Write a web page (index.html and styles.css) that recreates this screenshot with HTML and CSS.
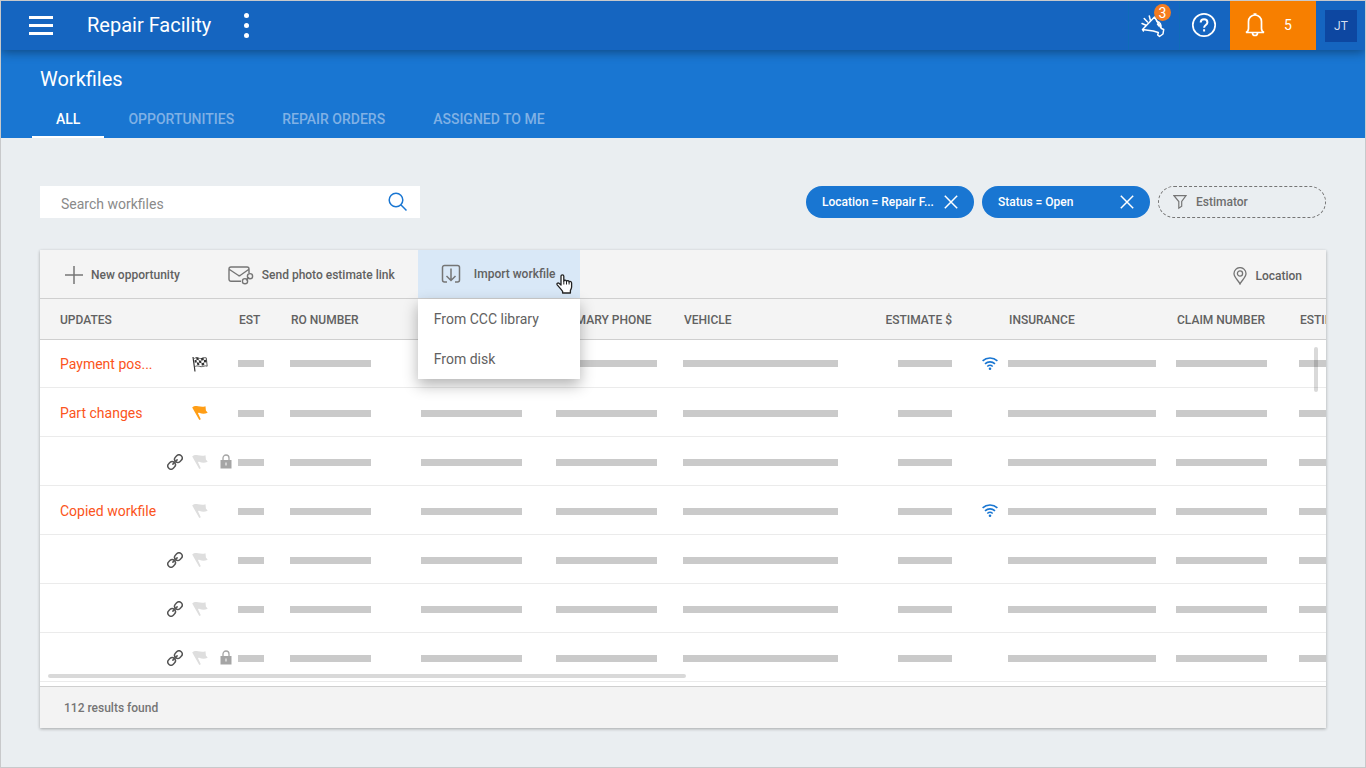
FILE: index.html
```html
<!DOCTYPE html>
<html lang="en">
<head>
    <meta charset="UTF-8">
    <meta name="viewport" content="width=device-width, initial-scale=1.0">
    <title>Workfiles</title>
    <link rel="stylesheet" href="styles.css">
</head>
<body>
    <!-- shared row icons -->
    <svg class="sprite" aria-hidden="true">
        <symbol id="flag" viewBox="0 0 16 16">
            <path fill="currentColor" d="M.2 2.500C2 .8 4 .7 6 1.200c2.500.4 4.500 1 7.500 0l.4 4.400 1.800 2.200c-3 1.300-5.600 1.200-8 .2-.7-.3-1.300-.2-1.700.2l2.800 6-1.500.8z"/>
        </symbol>
        <symbol id="checkered" viewBox="0 0 16 16">
            <path fill="none" stroke="currentColor" stroke-width="1.200" d="M1 1l2 14.500"/>
            <path fill="none" stroke="currentColor" stroke-width=".8" d="M2.300 2.500c2.500-2 4.500.4 7 0 2-.4 3-1.200 5-.6l.9 8.300c-2.500-1-4 .6-6 .5-2.500-.2-3.500-1.500-6-.3"/>
            <path fill="currentColor" d="M4.200 1.300l2.300.5.3 2.500-2.300-.5zM9 2.300l2.500-.8.3 2.500-2.500.7zM6.800 4.300l2.400.5.3 2.500-2.400-.5zM11.800 4l2.500-.2.3 2.500-2.500.2zM4.800 6.300l2.300.5.3 2.500-2.300-.5zM9.500 7.300l2.500-.8.3 2.500-2.500.8zM2.500 4.200l2-.4.3 2.500-2 .4z"/>
        </symbol>
        <symbol id="chain" viewBox="0 0 16 16">
            <g fill="none" stroke="currentColor" stroke-width="1.500" stroke-linecap="round" transform="rotate(-45 8 8)">
                <rect x="-.8" y="4.800" width="8" height="6.400" rx="3.200"/>
                <rect x="8.800" y="4.800" width="8" height="6.400" rx="3.200"/>
                <path d="M5 8h6"/>
            </g>
        </symbol>
        <symbol id="lock" viewBox="0 0 12 16">
            <path fill="none" stroke="currentColor" stroke-width="1.300" d="M3 7V4a3 3 0 0 1 6 0V7"/>
            <path fill="currentColor" fill-rule="evenodd" d="M.5 6h11v8.500H.5zM5.500 8.500v3h1v-3z"/>
        </symbol>
        <symbol id="wifi" viewBox="0 0 16 14">
            <path fill="none" stroke="currentColor" stroke-width="1.600" d="M.6 3.900a11 11 0 0 1 14.800 0M3 6.800a7.500 7.500 0 0 1 10 0M5.300 9.500a4 4 0 0 1 5.400 0"/>
            <circle cx="8" cy="11.700" r="1.300" fill="currentColor"/>
        </symbol>
        <symbol id="close" viewBox="0 0 14 14">
            <path fill="none" stroke="currentColor" stroke-width="1.500" d="M.8.8l12.400 12.400M13.200.8L.8 13.200"/>
        </symbol>
    </svg>

    <header class="topbar">
        <button class="menu-btn" aria-label="Menu"><span></span><span></span><span></span></button>
        <div class="brand">Repair Facility</div>
        <button class="more-btn" aria-label="More"><span></span><span></span><span></span></button>
        <div class="top-actions">
            <button class="top-btn" aria-label="Announcements">
                <svg width="26" height="26" viewBox="0 0 26 26" fill="none" stroke="#fff" stroke-width="1.500" stroke-linejoin="round" stroke-linecap="round">
                    <path d="M2.500 17.500L14.500 5l7 11.500 2.200 1-.7 4.500-3.500 2.500-1.800-1.500.6-2.500-5-1.500zM2.500 17.500l1 1.500"/>
                    <path d="M17 9.500a4.200 4.200 0 0 1 3.500 6M17.500 12l1.500 2M2 11.500l4 1.800M4.200 6.500l3.300 3.500M9.300 4l1 4"/>
                </svg>
                <span class="badge">3</span>
            </button>
            <button class="top-btn" aria-label="Help">
                <svg width="26" height="26" viewBox="0 0 26 26" fill="none" stroke="#fff">
                    <circle cx="13" cy="13" r="11.200" stroke-width="1.700"/>
                    <path stroke-width="2" d="M9.700 10.600c0-4.400 6.700-4.200 6.700-.2 0 2.400-3.300 2.700-3.300 5.300M13.100 17.200v2.200"/>
                </svg>
            </button>
            <button class="top-btn alerts" aria-label="Notifications">
                <svg width="20" height="26" viewBox="0 0 20 26" fill="none" stroke="#fff" stroke-width="1.700">
                    <path d="M1 20.500c2-1 2.500-2 2.500-4V9.500a6.500 6.500 0 0 1 13 0v7c0 2 .5 3 2.500 4zM8.500 2.200h3M7.500 21a2.500 2.500 0 0 0 5 0"/>
                </svg>
                <span>5</span>
            </button>
            <button class="avatar">JT</button>
        </div>
    </header>

    <section class="subheader">
        <h1>Workfiles</h1>
        <nav class="tabs">
            <a href="#" class="active">ALL</a>
            <a href="#">OPPORTUNITIES</a>
            <a href="#">REPAIR ORDERS</a>
            <a href="#">ASSIGNED TO ME</a>
        </nav>
    </section>

    <main>
        <div class="filters">
            <div class="search">
                <input type="text" placeholder="Search workfiles" aria-label="Search workfiles">
                <button aria-label="Search">
                    <svg width="20" height="20" viewBox="0 0 20 20" fill="none" stroke="#1976d2" stroke-width="1.500">
                        <circle cx="8" cy="8" r="6.800"/>
                        <path d="M12.800 12.800l5.700 5.700"/>
                    </svg>
                </button>
            </div>
            <div class="chips">
                <button class="chip">Location = Repair F...<svg width="14" height="14"><use href="#close"/></svg></button>
                <button class="chip">Status = Open<svg width="14" height="14"><use href="#close"/></svg></button>
                <button class="chip empty">
                    <svg width="14" height="16" viewBox="0 0 14 16" fill="none" stroke="#757575" stroke-width="1.200">
                        <path d="M1 1.700h12L8.700 7.500v4.700l-2.900 2V7.500z"/>
                    </svg>
                    Estimator
                </button>
            </div>
        </div>

        <div class="card">
            <div class="toolbar">
                <button class="tool">
                    <svg width="18" height="18" viewBox="0 0 18 18" stroke="#757575" stroke-width="1.500">
                        <path d="M9 0v18M0 9h18"/>
                    </svg>
                    New opportunity
                </button>
                <button class="tool">
                    <svg width="26" height="20" viewBox="0 0 26 20" fill="none" stroke="#757575" stroke-width="1.400">
                        <path d="M13 16.300H3A2 2 0 0 1 1 14.300V4A2 2 0 0 1 3 2h16a2 2 0 0 1 2 2v4M1.500 4.500l9 6q.8.4 1.600 0l8.500-6"/>
                        <circle cx="17" cy="16.200" r="2.600"/>
                        <circle cx="22" cy="11.200" r="2.600"/>
                        <path d="M18 15.200l3-3"/>
                    </svg>
                    Send photo estimate link
                </button>
                <div class="import">
                    <button class="tool open" aria-expanded="true">
                        <svg width="20" height="20" viewBox="0 0 20 20" fill="none" stroke="#757575" stroke-width="1.500">
                            <path d="M6 18H3.500a2 2 0 0 1-2-2V3.500a2 2 0 0 1 2-2h13a2 2 0 0 1 2 2V16a2 2 0 0 1-2 2H14M10 4.500v12M5.500 12l4.500 4.500 4.500-4.500"/>
                        </svg>
                        Import workfile
                    </button>
                    <div class="dropdown">
                        <button>From CCC library</button>
                        <button>From disk</button>
                    </div>
                    <svg class="pointer" width="18" height="20" viewBox="0 0 18 20">
                        <path fill="#fff" stroke="#222" stroke-width="1.300" stroke-linejoin="round" d="M5 11V2.300a1.400 1.400 0 0 1 2.800 0V7c.3-1.200 2.500-1.200 2.700.3.600-1 2.500-.8 2.600.6.800-.8 2.500-.5 2.500 1V13c0 1.500-.8 2.500-1.200 3.500V19H6.600v-1.700C5.300 15.500 3 13 1.200 10.800c-.8-1.200.7-2.300 1.800-1.500z"/>
                        <path stroke="#222" d="M7.800 7v3.500M10.500 7.500v3M13.100 8v2.500"/>
                    </svg>
                </div>
                <button class="tool location">
                    <svg width="14" height="18" viewBox="0 0 14 18" fill="none" stroke="#757575" stroke-width="1.300">
                        <path d="M7 17C5.500 13.500 1 10.500 1 6.600a6 6 0 0 1 12 0C13 10.500 8.500 13.500 7 17z"/>
                        <circle cx="7" cy="6.500" r="2.600"/>
                    </svg>
                    Location
                </button>
            </div>

            <div class="grid">
                <table>
                    <colgroup>
                        <col class="c-updates"><col class="c-icons"><col class="c-est"><col class="c-ro"><col class="c-blank"><col class="c-phone"><col class="c-vehicle"><col class="c-amount"><col class="c-wifi"><col class="c-insurance"><col class="c-claim"><col>
                    </colgroup>
                    <thead>
                        <tr>
                            <th>UPDATES</th>
                            <th></th>
                            <th>EST</th>
                            <th>RO NUMBER</th>
                            <th></th>
                            <th>PRIMARY PHONE</th>
                            <th>VEHICLE</th>
                            <th class="right">ESTIMATE $</th>
                            <th></th>
                            <th>INSURANCE</th>
                            <th>CLAIM NUMBER</th>
                            <th>ESTIMATOR</th>
                        </tr>
                    </thead>
                    <tbody>
                        <tr>
                            <td><a href="#">Payment pos...</a></td>
                            <td><div class="icons"><svg class="i-flag dark"><use href="#checkered"/></svg></div></td>
                            <td><div class="bar b-est"></div></td>
                            <td><div class="bar b-ro"></div></td>
                            <td><div class="bar b-phone"></div></td>
                            <td><div class="bar b-phone"></div></td>
                            <td><div class="bar b-vehicle"></div></td>
                            <td><div class="bar b-amount"></div></td>
                            <td><svg class="i-wifi"><use href="#wifi"/></svg></td>
                            <td><div class="bar b-insurance"></div></td>
                            <td><div class="bar b-claim"></div></td>
                            <td><div class="bar b-claim"></div></td>
                        </tr>
                        <tr>
                            <td><a href="#">Part changes</a></td>
                            <td><div class="icons"><svg class="i-flag orange"><use href="#flag"/></svg></div></td>
                            <td><div class="bar b-est"></div></td>
                            <td><div class="bar b-ro"></div></td>
                            <td><div class="bar b-phone"></div></td>
                            <td><div class="bar b-phone"></div></td>
                            <td><div class="bar b-vehicle"></div></td>
                            <td><div class="bar b-amount"></div></td>
                            <td></td>
                            <td><div class="bar b-insurance"></div></td>
                            <td><div class="bar b-claim"></div></td>
                            <td><div class="bar b-claim"></div></td>
                        </tr>
                        <tr>
                            <td></td>
                            <td><div class="icons"><svg class="i-chain"><use href="#chain"/></svg><svg class="i-flag"><use href="#flag"/></svg><svg class="i-lock"><use href="#lock"/></svg></div></td>
                            <td><div class="bar b-est"></div></td>
                            <td><div class="bar b-ro"></div></td>
                            <td><div class="bar b-phone"></div></td>
                            <td><div class="bar b-phone"></div></td>
                            <td><div class="bar b-vehicle"></div></td>
                            <td><div class="bar b-amount"></div></td>
                            <td></td>
                            <td><div class="bar b-insurance"></div></td>
                            <td><div class="bar b-claim"></div></td>
                            <td><div class="bar b-claim"></div></td>
                        </tr>
                        <tr>
                            <td><a href="#">Copied workfile</a></td>
                            <td><div class="icons"><svg class="i-flag"><use href="#flag"/></svg></div></td>
                            <td><div class="bar b-est"></div></td>
                            <td><div class="bar b-ro"></div></td>
                            <td><div class="bar b-phone"></div></td>
                            <td><div class="bar b-phone"></div></td>
                            <td><div class="bar b-vehicle"></div></td>
                            <td><div class="bar b-amount"></div></td>
                            <td><svg class="i-wifi"><use href="#wifi"/></svg></td>
                            <td><div class="bar b-insurance"></div></td>
                            <td><div class="bar b-claim"></div></td>
                            <td><div class="bar b-claim"></div></td>
                        </tr>
                        <tr>
                            <td></td>
                            <td><div class="icons"><svg class="i-chain"><use href="#chain"/></svg><svg class="i-flag"><use href="#flag"/></svg></div></td>
                            <td><div class="bar b-est"></div></td>
                            <td><div class="bar b-ro"></div></td>
                            <td><div class="bar b-phone"></div></td>
                            <td><div class="bar b-phone"></div></td>
                            <td><div class="bar b-vehicle"></div></td>
                            <td><div class="bar b-amount"></div></td>
                            <td></td>
                            <td><div class="bar b-insurance"></div></td>
                            <td><div class="bar b-claim"></div></td>
                            <td><div class="bar b-claim"></div></td>
                        </tr>
                        <tr>
                            <td></td>
                            <td><div class="icons"><svg class="i-chain"><use href="#chain"/></svg><svg class="i-flag"><use href="#flag"/></svg></div></td>
                            <td><div class="bar b-est"></div></td>
                            <td><div class="bar b-ro"></div></td>
                            <td><div class="bar b-phone"></div></td>
                            <td><div class="bar b-phone"></div></td>
                            <td><div class="bar b-vehicle"></div></td>
                            <td><div class="bar b-amount"></div></td>
                            <td></td>
                            <td><div class="bar b-insurance"></div></td>
                            <td><div class="bar b-claim"></div></td>
                            <td><div class="bar b-claim"></div></td>
                        </tr>
                        <tr>
                            <td></td>
                            <td><div class="icons"><svg class="i-chain"><use href="#chain"/></svg><svg class="i-flag"><use href="#flag"/></svg><svg class="i-lock"><use href="#lock"/></svg></div></td>
                            <td><div class="bar b-est"></div></td>
                            <td><div class="bar b-ro"></div></td>
                            <td><div class="bar b-phone"></div></td>
                            <td><div class="bar b-phone"></div></td>
                            <td><div class="bar b-vehicle"></div></td>
                            <td><div class="bar b-amount"></div></td>
                            <td></td>
                            <td><div class="bar b-insurance"></div></td>
                            <td><div class="bar b-claim"></div></td>
                            <td><div class="bar b-claim"></div></td>
                        </tr>
                    </tbody>
                </table>
                <div class="scroll-y"></div>
                <div class="scroll-x"></div>
            </div>

            <div class="card-footer">112 results found</div>
        </div>
    </main>
</body>
</html>
```

FILE: styles.css
```css
* {
    box-sizing: border-box;
}

body {
    margin: 0;
    min-height: 100vh;
    border: 1px solid #c8c9cb;
    background: #eaeef1;
    font-family: Roboto, "Liberation Sans", sans-serif;
    font-size: 14px;
    color: #616161;
}

button {
    font: inherit;
    color: inherit;
    border: 0;
    padding: 0;
    background: transparent;
    cursor: pointer;
}

a {
    text-decoration: none;
}

svg {
    display: block;
    flex: none;
}

.sprite {
    position: absolute;
    width: 0;
    height: 0;
}

/* top bar */
.topbar {
    position: relative;
    z-index: 1;
    display: flex;
    align-items: center;
    height: 49px;
    padding-left: 28px;
    background: #1565c0;
    color: #fff;
    box-shadow: 0 2px 10px rgba(0, 0, 0, .4);
}

.menu-btn {
    display: flex;
    flex-direction: column;
    gap: 5px;
    width: 24px;
}

.menu-btn span {
    height: 3px;
    background: #fff;
}

.brand {
    margin-left: 34px;
    padding-bottom: 2px;
    font-size: 20px;
}

.more-btn {
    display: flex;
    flex-direction: column;
    gap: 5px;
    margin-left: 33px;
    padding-bottom: 1px;
}

.more-btn span {
    width: 5px;
    height: 5px;
    border-radius: 50%;
    background: #fff;
}

.top-actions {
    display: flex;
    align-items: center;
    height: 100%;
    margin-left: auto;
    padding-right: 8px;
}

.top-btn {
    position: relative;
    display: flex;
    align-items: center;
    justify-content: center;
    width: 51px;
    height: 100%;
    padding: 0 2px 2px 0;
    border-left: 1px solid #0f6cb8;
}

.badge {
    position: absolute;
    top: 3px;
    right: 8px;
    width: 17px;
    height: 17px;
    border-radius: 50%;
    background: #f57c20;
    line-height: 18px;
}

.alerts {
    justify-content: flex-start;
    gap: 19px;
    width: 86px;
    padding-left: 15px;
    border: 0;
    background: #f77f00;
}

.avatar {
    width: 32px;
    height: 32px;
    margin-left: 9px;
    background: #0d47a1;
    font-size: 12px;
    color: #d5dff0;
}

/* page title and tabs */
.subheader {
    display: flex;
    flex-direction: column;
    height: 88px;
    padding: 17px 31px 0;
    background: #1976d2;
    color: #fff;
}

.subheader h1 {
    margin: 0 8px;
    font-size: 20px;
    line-height: 24px;
    font-weight: 400;
}

.tabs {
    display: flex;
    margin-top: auto;
}

.tabs a {
    height: 38px;
    padding: 0 24px;
    border-bottom: 2px solid transparent;
    line-height: 38px;
    font-weight: 500;
    color: #80b1e5;
}

.tabs .active {
    border-color: #fff;
    color: #fff;
}

main {
    padding: 48px 39px 39px;
}

/* search and filter chips */
.filters {
    display: flex;
    justify-content: space-between;
}

.search {
    display: flex;
    align-items: center;
    width: 380px;
    height: 32px;
    padding-right: 12px;
    background: #fff;
}

.search input {
    flex: 1;
    height: 32px;
    padding: 4px 0 0 21px;
    border: 0;
    outline: 0;
    background: transparent;
    font: inherit;
}

.search input::placeholder {
    color: #8a8a8a;
}

.chips {
    display: flex;
    gap: 8px;
}

.chip {
    display: flex;
    align-items: center;
    justify-content: space-between;
    width: 168px;
    height: 32px;
    padding: 0 16px;
    border-radius: 16px;
    background: #1976d2;
    color: #fff;
    font-size: 12px;
    font-weight: 500;
}

.chip.empty {
    justify-content: flex-start;
    gap: 9px;
    padding: 0 14px;
    border: 1px dashed #757575;
    background: transparent;
    color: #6e6e6e;
}

/* card */
.card {
    margin-top: 32px;
    background: #fff;
    box-shadow: 0 1px 3px rgba(0, 0, 0, .3);
}

.toolbar {
    display: flex;
    height: 49px;
    padding-left: 25px;
    border-bottom: 1px solid #cfcfcf;
    background: #f4f4f4;
}

.tool {
    display: flex;
    align-items: center;
    gap: 8px;
    height: 48px;
    margin-right: 48px;
    padding-top: 2px;
    font-size: 12px;
    font-weight: 500;
}

.tool + .import {
    margin-left: -25px;
}

.import {
    position: relative;
    z-index: 2;
}

.tool.open {
    gap: 13px;
    width: 162px;
    margin: 0;
    padding: 0 0 0 23px;
    background: #d9e8f7;
}

.dropdown {
    position: absolute;
    top: 49px;
    left: 0;
    width: 100%;
    background: #fff;
    box-shadow: 0 6px 14px rgba(0, 0, 0, .3);
}

.dropdown button {
    display: block;
    width: 100%;
    height: 40px;
    padding-left: 16px;
    text-align: left;
}

.pointer {
    position: absolute;
    top: 24px;
    right: 6px;
}

.toolbar .location {
    margin-left: auto;
    margin-right: 24px;
    padding-top: 4px;
}

/* results table */
.grid {
    position: relative;
    overflow: hidden;
    padding-bottom: 4px;
}

table {
    width: 100%;
    min-width: 1420px;
    table-layout: fixed;
    border-collapse: separate;
    border-spacing: 0;
}

.c-updates { width: 127px; }
.c-icons { width: 71px; }
.c-est { width: 52px; }
.c-ro { width: 131px; }
.c-blank { width: 135px; }
.c-phone { width: 127px; }
.c-vehicle { width: 185px; }
.c-amount { width: 84px; }
.c-wifi { width: 56px; }
.c-insurance { width: 168px; }
.c-claim { width: 123px; }

th {
    height: 41px;
    padding: 2px 0 0 1px;
    border-bottom: 1px solid #cfcfcf;
    background: #f4f4f4;
    font-size: 12px;
    font-weight: 500;
    text-align: left;
    white-space: nowrap;
}

.right {
    text-align: right;
}

td {
    height: 49px;
    padding: 2px 0 0;
    border-bottom: 1px solid #ebebeb;
    white-space: nowrap;
}

tr:first-child td {
    height: 48px;
    padding: 0;
}

th:first-child,
td:first-child,
tr:first-child td:first-child {
    padding-left: 20px;
}

td a {
    color: #fb5420;
}

.bar {
    height: 7px;
    background: #cacaca;
}

.b-est { width: 26px; }
.b-ro { width: 81px; }
.b-phone { width: 101px; }
.b-vehicle { width: 155px; }
.b-amount { width: 54px; margin-left: auto; }
.b-insurance { width: 148px; }
.b-claim { width: 91px; }

.icons {
    display: grid;
    grid-template-columns: 25px 28px 12px;
    align-items: center;
}

.i-chain {
    grid-column: 1;
    width: 16px;
    height: 16px;
    color: #555;
}

.i-flag {
    grid-column: 2;
    width: 16px;
    height: 16px;
    color: #dedede;
}

.i-flag.dark {
    color: #333;
}

.i-flag.orange {
    color: #ff9e16;
}

.i-lock {
    grid-column: 3;
    width: 12px;
    height: 16px;
    color: #a5a5a5;
}

.i-wifi {
    width: 16px;
    height: 14px;
    margin-left: 30px;
    color: #1976d2;
}

.scroll-y,
.scroll-x {
    position: absolute;
    border-radius: 2px;
    background: rgba(0, 0, 0, .15);
}

.scroll-y {
    top: 48px;
    right: 8px;
    width: 4px;
    height: 45px;
}

.scroll-x {
    bottom: 8px;
    left: 8px;
    width: 638px;
    height: 4px;
}

.card-footer {
    height: 42px;
    padding-left: 24px;
    border-top: 1px solid #cfcfcf;
    background: #f3f3f3;
    font-size: 12px;
    line-height: 42px;
    font-weight: 500;
    color: #757575;
}
```
